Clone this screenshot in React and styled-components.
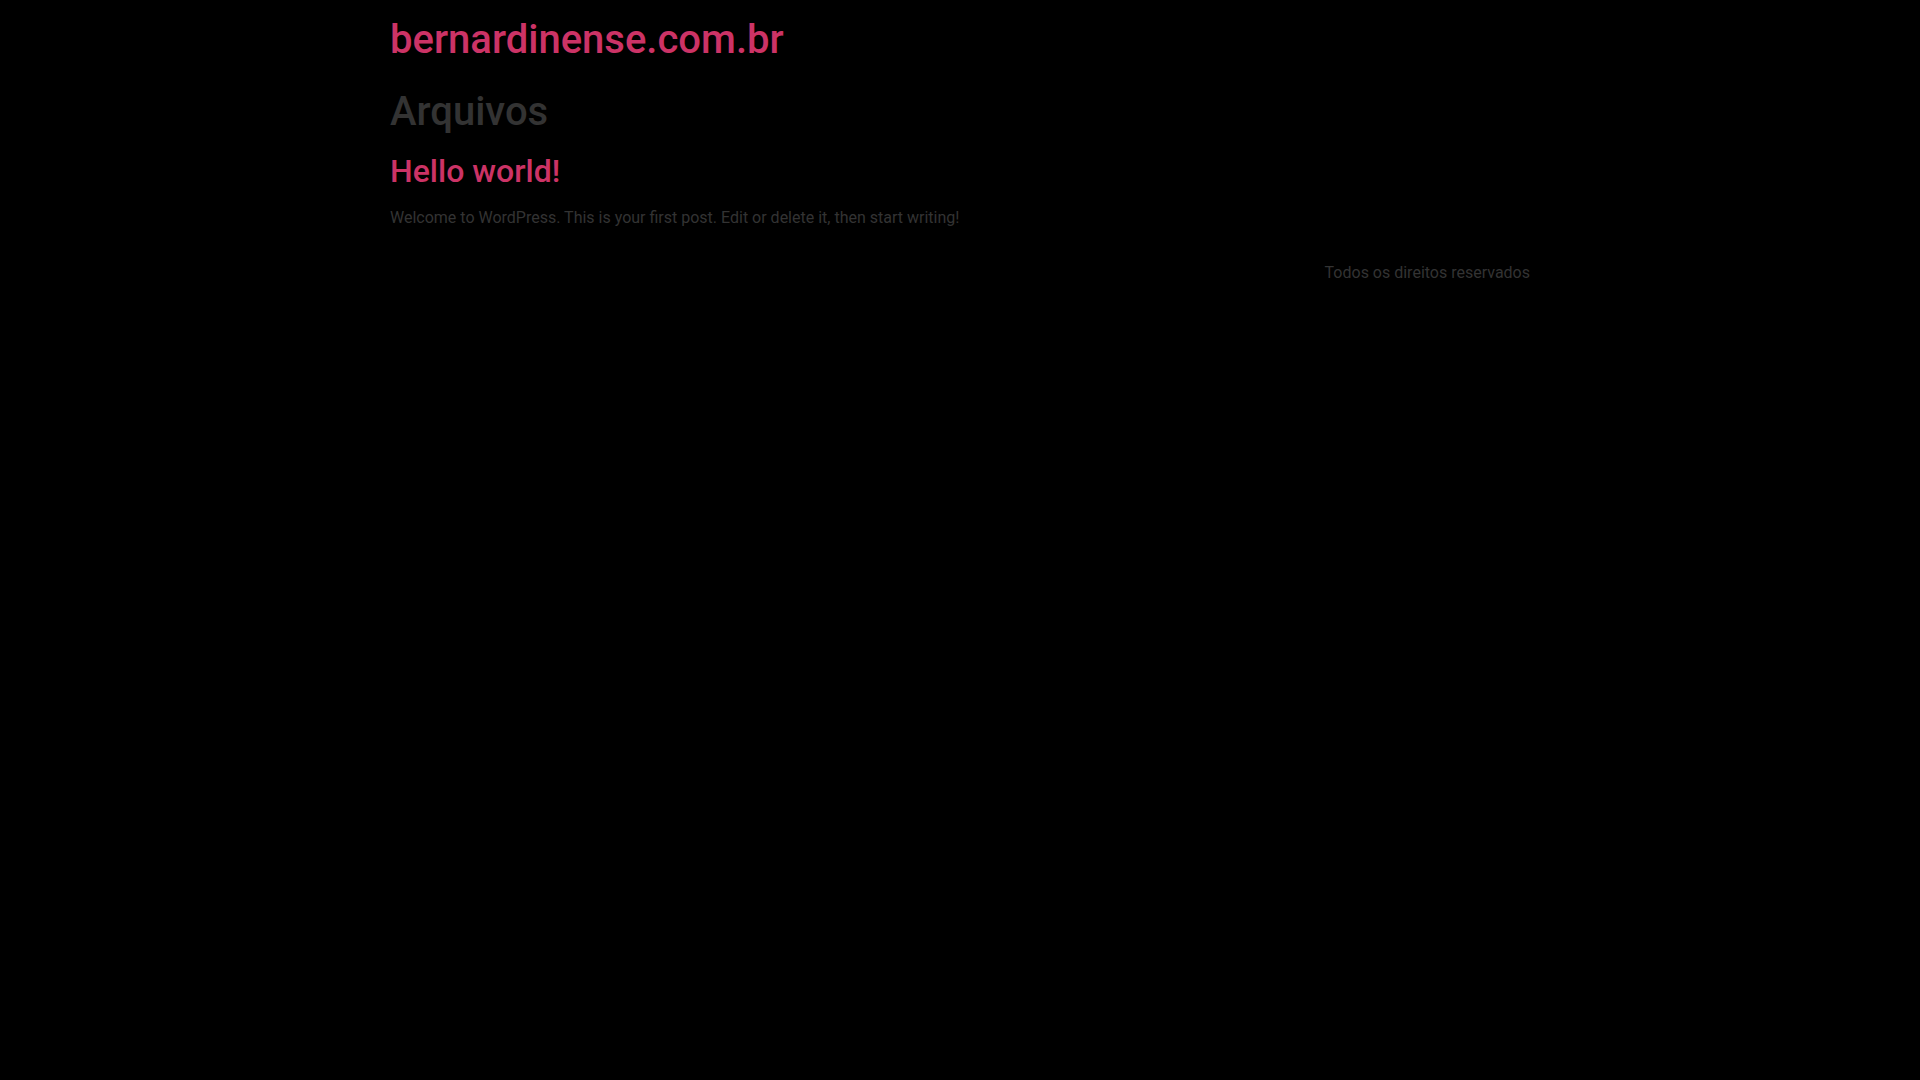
import styled, { createGlobalStyle } from 'styled-components'

const GlobalStyle = createGlobalStyle`
    * {
        box-sizing: border-box;
    }
    body {
        margin: 0;
        background-color: #000;
        color: #333;
        font-family: Roboto, "Liberation Sans", sans-serif;
        font-size: 16px;
        line-height: 24px;
    }
`
const Container = styled.div`
    max-width: 1140px;
    margin: 0 auto;
`
const Header = styled.header`
    padding: 16px 0;
`
const Title = styled.h1`
    margin: 8px 0 16px;
    font-size: 40px;
    font-weight: 500;
    line-height: 48px;
`
const SiteTitle = styled(Title)`
    margin: 0;
`
const PostTitle = styled.h2`
    margin: 8px 0 16px;
    font-size: 32px;
    font-weight: 500;
    line-height: 38px;
`
const Link = styled.a`
    color: #c36;
    text-decoration: none;
`
const Text = styled.p`
    margin: 0;
`
const Footer = styled.footer`
    display: flex;
    justify-content: flex-end;
    padding: 31px 0 16px;
`

const App = () => {
    return (
        <Container>
            <GlobalStyle />
            <Header>
                <SiteTitle><Link href="/">bernardinense.com.br</Link></SiteTitle>
            </Header>
            <main>
                <Title>Arquivos</Title>
                <article>
                    <PostTitle><Link href="/hello-world">Hello world!</Link></PostTitle>
                    <Text>Welcome to WordPress. This is your first post. Edit or delete it, then start writing!</Text>
                </article>
            </main>
            <Footer>
                <Text>Todos os direitos reservados</Text>
            </Footer>
        </Container>
    )
}

export default App
